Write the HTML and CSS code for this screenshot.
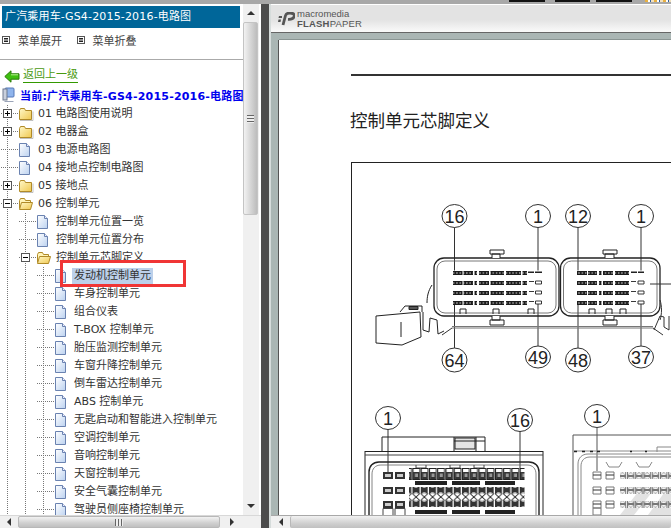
FILE: index.html
```html
<!DOCTYPE html>
<html lang="zh">
<head>
<meta charset="utf-8">
<title>广汽乘用车-GS4-2015-2016-电路图</title>
<link rel="stylesheet" href="styles.css">
</head>
<body>
<svg class="defs" width="0" height="0">
  <defs>
    <g id="i-plus"><rect x=".5" y=".5" width="8" height="8" fill="#fff" stroke="#555"/><path d="M2 4.5h5M4.5 2v5" stroke="#000"/></g>
    <g id="i-minus"><rect x=".5" y=".5" width="8" height="8" fill="#fff" stroke="#555"/><path d="M2 4.5h5" stroke="#000"/></g>
    <linearGradient id="fg" x1="0" y1="0" x2="1" y2="1"><stop offset="0" stop-color="#fff8c8"/><stop offset="1" stop-color="#f0c850"/></linearGradient>
    <linearGradient id="dg" x1="0" y1="0" x2="1" y2="1"><stop offset="0" stop-color="#fff"/><stop offset="1" stop-color="#bcd2f0"/></linearGradient>
    <g id="i-folder"><path d="M1.5 3.500l1-2h4l1 2h6v9h-12z" fill="url(#fg)" stroke="#b08a28"/><path d="M2 13.500h13v-9" fill="none" stroke="#999" stroke-opacity=".6"/></g>
    <g id="i-open"><path d="M1.500 11.500v-8l1-2h4l1 2h5v2" fill="#fff4b8" stroke="#b08a28"/><path d="M1.500 12.500l2-7h11l-2 7z" fill="url(#fg)" stroke="#b08a28"/></g>
    <g id="i-file"><path d="M1.500.5h7l3 3v10h-10z" fill="url(#dg)" stroke="#6a82b0"/><path d="M8.500.5v3h3" fill="#eef" stroke="#6a82b0"/></g>
    <g id="i-menu"><rect x=".5" y=".5" width="7" height="7" fill="#fff" stroke="#555"/><path d="M2 2.500h4M2 4h4M2 5.500h4" stroke="#222"/></g>
  </defs>
</svg>

<div class="strip">
  <span class="strip-seg seg-a"></span><span class="strip-seg seg-b"></span><span class="strip-seg seg-c"></span><span class="strip-color"></span>
</div>

<div class="app">
  <aside class="sidebar">
    <div class="side-main">
      <div class="panel">
        <div class="title">广汽乘用车-GS4-2015-2016-电路图</div>
        <div class="menu">
          <span class="menu-item"><svg class="menu-ico" width="8" height="8"><use href="#i-menu"/></svg>菜单展开</span>
          <span class="menu-item"><svg class="menu-ico" width="8" height="8"><use href="#i-menu"/></svg>菜单折叠</span>
        </div>
        <div class="back">
          <svg class="back-ico" width="16" height="13" viewBox="0 0 16 13"><path d="M.8 6.500L7 .8v3h8v5.400H7v3z" fill="#3fc010" stroke="#2a7a08"/><path d="M7 4.800h7" stroke="#b8f090"/></svg>
          <a class="back-link">返回上一级</a>
        </div>
        <div class="current">
          <svg class="pc-ico" width="14" height="16" viewBox="0 0 14 16"><rect x="3" y="1" width="9" height="9" rx="1" fill="#8fb4ec" stroke="#5578b8"/><rect x="1" y="2" width="4" height="11" fill="#c8cfdc" stroke="#6f7a90"/><path d="M3 14h8l1 1H2z" fill="#9aa4b8"/></svg>
          <span class="current-text">当前:广汽乘用车-GS4-2015-2016-电路图</span>
        </div>
        <div class="tree">
          <div class="row"><span class="guide-j"><svg class="box" width="9" height="9"><use href="#i-plus"/></svg></span><svg class="ico" width="16" height="15"><use href="#i-folder"/></svg><span class="lbl">01 电路图使用说明</span></div>
          <div class="row"><span class="guide-j"><svg class="box" width="9" height="9"><use href="#i-plus"/></svg></span><svg class="ico" width="16" height="15"><use href="#i-folder"/></svg><span class="lbl">02 电器盒</span></div>
          <div class="row"><span class="guide-j"></span><svg class="ico" width="16" height="15"><use href="#i-file"/></svg><span class="lbl">03 电源电路图</span></div>
          <div class="row"><span class="guide-j"></span><svg class="ico" width="16" height="15"><use href="#i-file"/></svg><span class="lbl">04 接地点控制电路图</span></div>
          <div class="row"><span class="guide-j"><svg class="box" width="9" height="9"><use href="#i-plus"/></svg></span><svg class="ico" width="16" height="15"><use href="#i-folder"/></svg><span class="lbl">05 接地点</span></div>
          <div class="row"><span class="guide-j"><svg class="box" width="9" height="9"><use href="#i-minus"/></svg></span><svg class="ico" width="16" height="15"><use href="#i-open"/></svg><span class="lbl">06 控制单元</span></div>
          <div class="row"><span class="guide"></span><span class="guide-j"></span><svg class="ico" width="16" height="15"><use href="#i-file"/></svg><span class="lbl">控制单元位置一览</span></div>
          <div class="row"><span class="guide"></span><span class="guide-j"></span><svg class="ico" width="16" height="15"><use href="#i-file"/></svg><span class="lbl">控制单元位置分布</span></div>
          <div class="row"><span class="guide"></span><span class="guide-j"><svg class="box" width="9" height="9"><use href="#i-minus"/></svg></span><svg class="ico" width="16" height="15"><use href="#i-open"/></svg><span class="lbl">控制单元芯脚定义</span></div>
          <div class="row"><span class="guide"></span><span class="guide"></span><span class="guide-j"></span><svg class="ico" width="16" height="15"><use href="#i-file"/></svg><span class="lbl lbl-sel">发动机控制单元</span></div>
          <div class="row"><span class="guide"></span><span class="guide"></span><span class="guide-j"></span><svg class="ico" width="16" height="15"><use href="#i-file"/></svg><span class="lbl">车身控制单元</span></div>
          <div class="row"><span class="guide"></span><span class="guide"></span><span class="guide-j"></span><svg class="ico" width="16" height="15"><use href="#i-file"/></svg><span class="lbl">组合仪表</span></div>
          <div class="row"><span class="guide"></span><span class="guide"></span><span class="guide-j"></span><svg class="ico" width="16" height="15"><use href="#i-file"/></svg><span class="lbl">T-BOX 控制单元</span></div>
          <div class="row"><span class="guide"></span><span class="guide"></span><span class="guide-j"></span><svg class="ico" width="16" height="15"><use href="#i-file"/></svg><span class="lbl">胎压监测控制单元</span></div>
          <div class="row"><span class="guide"></span><span class="guide"></span><span class="guide-j"></span><svg class="ico" width="16" height="15"><use href="#i-file"/></svg><span class="lbl">车窗升降控制单元</span></div>
          <div class="row"><span class="guide"></span><span class="guide"></span><span class="guide-j"></span><svg class="ico" width="16" height="15"><use href="#i-file"/></svg><span class="lbl">倒车雷达控制单元</span></div>
          <div class="row"><span class="guide"></span><span class="guide"></span><span class="guide-j"></span><svg class="ico" width="16" height="15"><use href="#i-file"/></svg><span class="lbl">ABS 控制单元</span></div>
          <div class="row"><span class="guide"></span><span class="guide"></span><span class="guide-j"></span><svg class="ico" width="16" height="15"><use href="#i-file"/></svg><span class="lbl">无匙启动和智能进入控制单元</span></div>
          <div class="row"><span class="guide"></span><span class="guide"></span><span class="guide-j"></span><svg class="ico" width="16" height="15"><use href="#i-file"/></svg><span class="lbl">空调控制单元</span></div>
          <div class="row"><span class="guide"></span><span class="guide"></span><span class="guide-j"></span><svg class="ico" width="16" height="15"><use href="#i-file"/></svg><span class="lbl">音响控制单元</span></div>
          <div class="row"><span class="guide"></span><span class="guide"></span><span class="guide-j"></span><svg class="ico" width="16" height="15"><use href="#i-file"/></svg><span class="lbl">天窗控制单元</span></div>
          <div class="row"><span class="guide"></span><span class="guide"></span><span class="guide-j"></span><svg class="ico" width="16" height="15"><use href="#i-file"/></svg><span class="lbl">安全气囊控制单元</span></div>
          <div class="row"><span class="guide"></span><span class="guide"></span><span class="guide-j"></span><svg class="ico" width="16" height="15"><use href="#i-file"/></svg><span class="lbl">驾驶员侧座椅控制单元</span></div>
        </div>
        <div class="redbox"></div>
      </div>
      <div class="vscroll">
        <div class="sb-btn"><span class="tri tri-up"></span></div>
        <div class="vthumb"><span class="grip-h"></span></div>
        <div class="vtrack"></div>
        <div class="sb-btn"><span class="tri tri-down"></span></div>
      </div>
    </div>
    <div class="hscroll hscroll-side">
      <div class="sb-btn-h"><span class="tri tri-left"></span></div>
      <div class="hthumb"><span class="grip-v"></span></div>
      <div class="sb-btn-h sb-btn-end"><span class="tri tri-right"></span></div>
    </div>
  </aside>

  <div class="splitter"></div>

  <main class="viewer">
    <header class="toolbar">
      <svg class="fp-logo" width="17" height="14" viewBox="0 0 17 14"><path d="M5 13L7.500 3.500C8 1.500 10 1 12 1c3 0 4.500 1 4.200 3-.4 2.500-3 3.500-6.200 3.300" fill="none" stroke="#555" stroke-width="2.800"/><path d="M1 4h3v2H.5zM.5 7.500h2.500L2.500 10H0z" fill="#555"/></svg>
      <div class="fp-text">
        <span class="fp-mm">macromedia</span>
        <span class="fp-name"><b>FLASH</b>PAPER</span>
      </div>
    </header>
    <div class="stage">
      <article class="page">
        <hr class="rule">
        <h1 class="doc-title">控制单元芯脚定义</h1>
        <div class="figure">
          <svg class="diagram" width="320" height="353" viewBox="0 0 320 353">
            <defs>
              <pattern id="pin" width="3.300" height="4" patternUnits="userSpaceOnUse"><rect width="3.300" height="4" fill="#1c1c1c"/><rect x=".9" y="1" width="1.300" height="2" fill="#8c8c8c"/></pattern>
              <pattern id="pinb" width="8.250" height="12" patternUnits="userSpaceOnUse"><rect x=".5" y=".5" width="6.800" height="11" fill="#fff" stroke="#222"/><rect x="1" y="4" width="6" height="7" fill="#333"/><rect x="2.500" y="5.500" width="3" height="3.500" fill="#999"/></pattern>
              <pattern id="pinc" width="8.250" height="7" patternUnits="userSpaceOnUse"><rect width="7" height="7" fill="#333"/><rect x="2" y="2" width="3" height="3" fill="#aaa"/></pattern>
              <pattern id="circ" width="8.250" height="7" patternUnits="userSpaceOnUse"><path d="M3.600 0L7.200 3.500 3.600 7 0 3.500z" fill="#fff" stroke="#333"/></pattern>
              <pattern id="ping" width="8.250" height="7" patternUnits="userSpaceOnUse"><rect x=".5" y=".5" width="6.500" height="6" fill="#f4f4f4" stroke="#777"/><path d="M1 1l5.500 5M6.500 1L1 6" stroke="#999" stroke-width=".7"/></pattern>
              <g id="rowA"><rect x="453" width="9.500" height="4" fill="url(#pin)"/><rect x="463.500" width="9.500" height="4" fill="url(#pin)"/><rect x="474.500" width="2.500" height="4" fill="url(#pin)"/><rect x="479" width="10" height="4" fill="url(#pin)"/><rect x="490.500" width="13.500" height="4" fill="url(#pin)"/><rect x="506" width="15" height="4" fill="url(#pin)"/><rect x="522.500" width="4.500" height="4" fill="url(#pin)"/></g>
              <g id="rowB"><rect x="577" width="10" height="4" fill="url(#pin)"/><rect x="588" width="9" height="4" fill="url(#pin)"/><rect x="599" width="2.500" height="4" fill="url(#pin)"/><rect x="603" width="10" height="4" fill="url(#pin)"/><rect x="615" width="14" height="4" fill="url(#pin)"/></g>
              <g id="dash"><path d="M529 .5h5M535.500 0h6v3h-6z" fill="#fff" stroke="#222" stroke-width=".9"/></g>
              <g id="dashB"><path d="M631 .5h5M638 0h6v3h-6z" fill="#fff" stroke="#222" stroke-width=".9"/></g>
            </defs>
            <g transform="translate(-352 -163)" fill="none" stroke="#222" stroke-width="1">
              <!-- pin-out bubbles -->
              <g stroke="#333" fill="#fff">
                <ellipse cx="454.500" cy="216" rx="12.500" ry="11.500"/>
                <ellipse cx="538" cy="216" rx="12.500" ry="11.500"/>
                <ellipse cx="578" cy="216" rx="12.500" ry="11.500"/>
                <ellipse cx="641" cy="216" rx="12.500" ry="11.500"/>
                <ellipse cx="454.500" cy="360" rx="12.500" ry="12"/>
                <ellipse cx="538" cy="357" rx="12.500" ry="11"/>
                <ellipse cx="578" cy="360" rx="12.500" ry="12"/>
                <ellipse cx="641" cy="357" rx="12.500" ry="11"/>
                <ellipse cx="388" cy="418" rx="12.500" ry="11.500"/>
                <ellipse cx="520" cy="420" rx="12.500" ry="11.500"/>
                <ellipse cx="597" cy="416" rx="12.500" ry="11.500"/>
              </g>
              <g class="bub">
                <text x="454.500" y="222.500">16</text><text x="538" y="222.500">1</text>
                <text x="578" y="222.500">12</text><text x="641" y="222.500">1</text>
                <text x="454.500" y="366.500">64</text><text x="538" y="363.500">49</text>
                <text x="578" y="366.500">48</text><text x="641" y="363.500">37</text>
                <text x="388" y="424.500">1</text><text x="520" y="426.500">16</text><text x="597" y="422.500">1</text>
              </g>
              <path d="M454.500 227.500v43M538 227.500v43M578 227.500v43M641 227.500v43M454.500 305v43M538 304v42M578 305v43M641 304v42" stroke="#333"/>

              <!-- connector A and B bodies -->
              <rect x="434" y="258" width="125" height="58" rx="10" stroke-width="1.300"/>
              <rect x="437" y="261" width="119" height="52" rx="8" stroke="#555" stroke-width=".8"/>
              <rect x="560.500" y="258" width="99.500" height="58" rx="10" stroke-width="1.300"/>
              <rect x="563.500" y="261" width="93.500" height="52" rx="8" stroke="#555" stroke-width=".8"/>
              <path d="M492 258v-4h8v4M490 254v-4h14v4zM603 254v-4h14v4zM605 258v-4h9v4M492 316v4h8v-4M490 320h14v5h-14zM605 316v4h9v-4M603 320h14v5h-14z" fill="#fff"/>
              <path d="M460 314v-5h6v5M493 314v-5h6v5M528 314v-5h6v5M589 314v-5h6v5M606 314v-5h6v5M620 314v-5h6v5"/>
              <path d="M452 328H653M452 326.500H653" stroke="#777"/>
              <path d="M442 335l10-7M653 328l10 7M660 320c2-6 2-14 0-20" stroke="#333"/>

              <!-- left plug -->
              <path d="M376 316l44-4 1 25-19 8-26-2zM401 322v15M400 312l5-6h17v6M432 285c-4 6-5 12-5 18M423 312v18l6 2 1-14 7 2 1 14 6-3" fill="#fff"/>
              <path d="M409 306.500h9v3h-9z" fill="#555"/>
              <!-- right plug bits -->
              <path d="M654 330l6-14 4 1v10l5 3v-14" stroke="#333"/>
              <path d="M650 284h21" stroke="#333"/>

              <!-- pin rows -->
              <g stroke="none">
                <use href="#rowA" y="271"/><use href="#rowA" y="281"/><use href="#rowA" y="291"/><use href="#rowA" y="301"/>
                <use href="#rowB" y="271"/><use href="#rowB" y="281"/><use href="#rowB" y="291"/><use href="#rowB" y="301"/>
                <path d="M528 271.500h6v1.500h-6zM535 271.500h7v1.500h-7zM631 271.500h6v1.500h-6zM638 271.500h6v1.500h-6z" fill="#222"/>
              </g>
              <use href="#dash" y="281"/><use href="#dash" y="291"/><use href="#dash" y="301"/>
              <use href="#dashB" y="281"/><use href="#dashB" y="291"/><use href="#dashB" y="301"/>

              <!-- lower left connector -->
              <path d="M388 429v43M520 431v37" stroke="#333"/>
              <path d="M382 451v-14h103v14M454 437v14M476 437v14M454 441h31" />
              <rect x="455" y="438" width="20" height="11" fill="#222" fill-opacity=".12"/>
              <rect x="365" y="451.500" width="178" height="70"/>
              <path d="M365 455h178" stroke="#444"/>
              <path d="M369 520v-48c0-6 4-10 10-10h150c6 0 10 4 10 10v48" stroke-width="1.400"/>
              <path d="M372 520v-46c0-5 3-9 9-9h146c6 0 9 4 9 9v46" stroke="#666" stroke-width=".8"/>
              <path d="M416 465v3h10v-3M450 465v3h10v-3M474 465v3h10v-3" stroke="#444"/>
              <g stroke="none">
                <path d="M383 472h10v7h-10zM395 472h10v7h-10zM383 487h10v7h-10zM395 487h10v7h-10zM383 501h10v7h-10zM395 501h10v7h-10z" fill="#333"/>
                <path d="M385 474h6v3h-6zM397 474h6v3h-6zM385 489h6v3h-6zM397 489h6v3h-6zM385 503h6v3h-6zM397 503h6v3h-6z" fill="#ccc"/>
                <rect x="409" y="468" width="115.500" height="12" fill="url(#pinb)"/>
                <path d="M415 481h32v4h-32zM452 481h28v4h-28zM485 481h30v4h-30zM415 510h32v4h-32zM452 510h28v4h-28zM485 510h30v4h-30z" fill="#222"/>
                <rect x="409" y="487" width="115.500" height="7" fill="url(#pinc)"/>
                <rect x="409" y="500" width="115.500" height="7" fill="url(#pinc)"/>
              </g>
              <rect x="409" y="493.500" width="115.500" height="7" fill="url(#circ)" stroke="none"/>
              <path d="M383 508.500h10v7h-10zM395 508.500h10v7h-10z" stroke="#444"/>

              <!-- lower right connector, faint print -->
              <g stroke="#888">
                <path d="M597 428v43" stroke="#555"/>
                <path d="M573 520v-85h104" stroke="#555"/>
                <path d="M574 451h98M578 520v-56c0-6 4-10 10-10h83M581 520v-54c0-5 3-9 9-9h81"/>
                <path d="M606 462l3 5h10l3-5M636 462l3 5h10l3-5M657 452v-5h14"/>
              </g>
              <path d="M574 451.500h3M582 451.500h3M590 451.500h3M597 451.500h3M630 451.500h2M645 451.500h2" stroke="#222" stroke-width="1.500"/>
              <path d="M620 515l22-28h14l-22 28zM648 515l16-22h7v22z" fill="#e2e2e2" stroke="none"/>
              <g stroke="#777">
                <path d="M593 472h8v7h-8zM606 472h8v7h-8zM593 487h8v7h-8zM606 487h8v7h-8zM593 501h8v7h-8zM606 501h8v7h-8zM593 508h8v7h-8z"/>
                <path d="M593 475h8M606 475h8M593 490h8M606 490h8M593 504h8M606 504h8" stroke="#333"/>
              </g>
              <g stroke="none">
                <rect x="620" y="472" width="51" height="7" fill="url(#ping)"/>
                <rect x="620" y="487" width="51" height="7" fill="url(#ping)"/>
                <rect x="620" y="501" width="51" height="7" fill="url(#ping)"/>
              </g>
            </g>
          </svg>
        </div>
      </article>
    </div>
    <div class="hscroll hscroll-view">
      <div class="sb-btn-v"><span class="tri tri-left"></span></div>
      <div class="hthumb hthumb-view"></div>
    </div>
  </main>
</div>
</body>
</html>
```
FILE: styles.css
```css
* { box-sizing: border-box; }
html, body { margin: 0; padding: 0; }
body {
  width: 671px;
  height: 528px;
  overflow: hidden;
  background: #fff;
  font-family: "DejaVu Sans", "Noto Sans CJK SC", sans-serif;
  font-size: 11px;
  color: #333;
  display: flex;
  flex-direction: column;
}
.defs { position: absolute; }

.strip {
  height: 4px;
  flex: none;
  background: #a8a8a8;
  display: flex;
  align-items: flex-start;
  padding-left: 509px;
}
.strip-seg { height: 2px; background: #111; }
.seg-a { width: 36px; margin-right: 10px; }
.seg-b { width: 35px; margin-right: 6px; }
.seg-c { width: 36px; margin-right: 13px; }
.strip-color {
  width: 26px;
  height: 2px;
  background: repeating-linear-gradient(90deg, #e8b040 0 3px, #fff 3px 5px, #3060a0 5px 6px, #f0e0c0 6px 9px);
}

.app { flex: 1; display: flex; min-height: 0; }

/* Sidebar */
.sidebar { width: 261px; flex: none; display: flex; flex-direction: column; background: #fff; }
.side-main { height: 511px; display: flex; flex: none; }
.panel { position: relative; width: 243px; flex: none; overflow: hidden; background: #fff; }

.title {
  margin: 2px 3px 0 2px;
  height: 22px;
  line-height: 22px;
  padding-left: 3px;
  background: #006699;
  color: #fff;
  white-space: nowrap;
  letter-spacing: .17px;
}
.menu { display: flex; height: 24px; align-items: center; padding-left: 2px; }
.menu-item { display: flex; align-items: center; width: 74.5px; color: #444; }
.menu-ico { margin-right: 8px; flex: none; }

.back {
  margin-top: 7px;
  border-top: 1px solid #aaa;
  padding: 7px 0 0 4px;
  height: 27px;
  display: flex;
  align-items: flex-start;
}
.back-ico { flex: none; margin: 3px 3px 0 0; }
.back-link {
  color: #4a9a10;
  line-height: 16px;
  border-bottom: 1px solid #339900;
  height: 16px;
}
.current { display: flex; align-items: center; height: 19px; padding: 0 0 1px 2px; white-space: nowrap; }
.pc-ico { flex: none; margin-right: 4px; }
.current-text { color: #0000ee; font-weight: 700; letter-spacing: .2px; }

.tree { display: flex; flex-direction: column; }
.row { display: flex; align-items: center; height: 18px; white-space: nowrap; flex: none; }
.guide, .guide-j { width: 18px; height: 18px; flex: none; position: relative; }
.guide {
  background: linear-gradient(#777 50%, transparent 50%) 7px 0 / 1px 2px repeat-y;
}
.guide-j {
  background:
    linear-gradient(#777 50%, transparent 50%) 7px 0 / 1px 2px repeat-y,
    linear-gradient(90deg, #777 50%, transparent 50%) 7px 8px / 2px 1px repeat-x;
}
.box { position: absolute; left: 3px; top: 4px; }
.ico { flex: none; margin-right: 4px; }
.lbl { display: block; line-height: 16px; }
.lbl-sel { background: #bcd0ea; margin-left: -2px; padding: 0 2px; color: #333; }

.redbox {
  position: absolute;
  left: 60px;
  top: 256px;
  width: 126px;
  height: 27px;
  border: 3px solid #f03535;
}

/* Scrollbars */
.vscroll { width: 16px; flex: none; background: #f0f0f0; display: flex; flex-direction: column; }
.sb-btn { height: 18px; flex: none; display: flex; align-items: center; justify-content: center; }
.vthumb {
  height: 193px;
  flex: none;
  width: 15px;
  border: 1px solid #c4c4c4;
  border-radius: 2px;
  background: linear-gradient(90deg, #f2f2f2, #d4d4d4 55%, #bcbcbc);
  display: flex;
  align-items: center;
  justify-content: center;
}
.vtrack { flex: 1; }
.grip-h { width: 7px; height: 8px; background: repeating-linear-gradient(#666 0 1px, #eee 1px 3px); }
.grip-v { width: 8px; height: 7px; background: repeating-linear-gradient(90deg, #666 0 1px, #eee 1px 3px); }
.tri { width: 0; height: 0; border: 4px solid transparent; display: block; }
.tri-up { border-bottom-color: #333; border-top-width: 0; }
.tri-down { border-top-color: #333; border-bottom-width: 0; }
.tri-left { border-right-color: #333; border-left-width: 0; }
.tri-right { border-left-color: #333; border-right-width: 0; }

.hscroll { height: 13px; flex: none; background: #f0f0f0; display: flex; }
.hscroll-side { border-top: 1px solid #d8d8d8; padding-right: 18px; }
.sb-btn-h { width: 18px; flex: none; display: flex; align-items: center; justify-content: center; }
.sb-btn-end { width: 23px; }
.hthumb {
  flex: 1;
  border: 1px solid #b8b8b8;
  border-radius: 2px;
  background: linear-gradient(#f2f2f2, #d0d0d0 60%, #c0c0c0);
  display: flex;
  align-items: center;
  justify-content: center;
}
.hscroll-view { border-top: 1px solid #a8a8a8; }
.sb-btn-v { width: 19px; flex: none; display: flex; align-items: center; justify-content: center; }
.hthumb-view { border-width: 0 0 0 1px; }

/* Viewer */
.splitter { width: 10px; flex: none; background: #4c4c4c; border-right: 2px solid #d6dcdb; }
.viewer { flex: 1; min-width: 0; display: flex; flex-direction: column; }
.toolbar {
  height: 29px;
  flex: none;
  border-top: 1px solid #fff;
  border-bottom: 1px solid #666;
  background: linear-gradient(#e3e3e3 0 55%, #fafafa 100%);
  display: flex;
  align-items: center;
  padding-left: 7px;
}
.fp-logo { flex: none; margin-right: 2px; }
.fp-text { display: flex; flex-direction: column; color: #555; font-family: "Liberation Sans", sans-serif; line-height: 10px; }
.fp-mm { font-size: 9.500px; height: 10px; }
.fp-name { font-size: 9.500px; height: 10px; letter-spacing: .2px; }
.stage { flex: 1; min-height: 0; background: #aab6b4; padding: 7px 0 0 8px; overflow: hidden; }
.page {
  height: 100%;
  background: #fff;
  box-shadow: -1px 0 0 #555, 0 -1px 0 #8a9593;
  padding: 34px 0 0 72px;
  overflow: hidden;
}
.rule { margin: 0; border: 0; height: 2px; background: #333; }
.doc-title {
  margin: 32px 0 30px -1px;
  font: 400 17.500px/24px "Noto Sans CJK SC", sans-serif;
  color: #222;
}
.figure { border-top: 1px solid #222; border-left: 1px solid #222; height: 400px; }
.diagram { display: block; }
.bub text {
  font: 400 18px "Liberation Sans", sans-serif;
  text-anchor: middle;
  fill: #222;
  stroke: none;
}
```
